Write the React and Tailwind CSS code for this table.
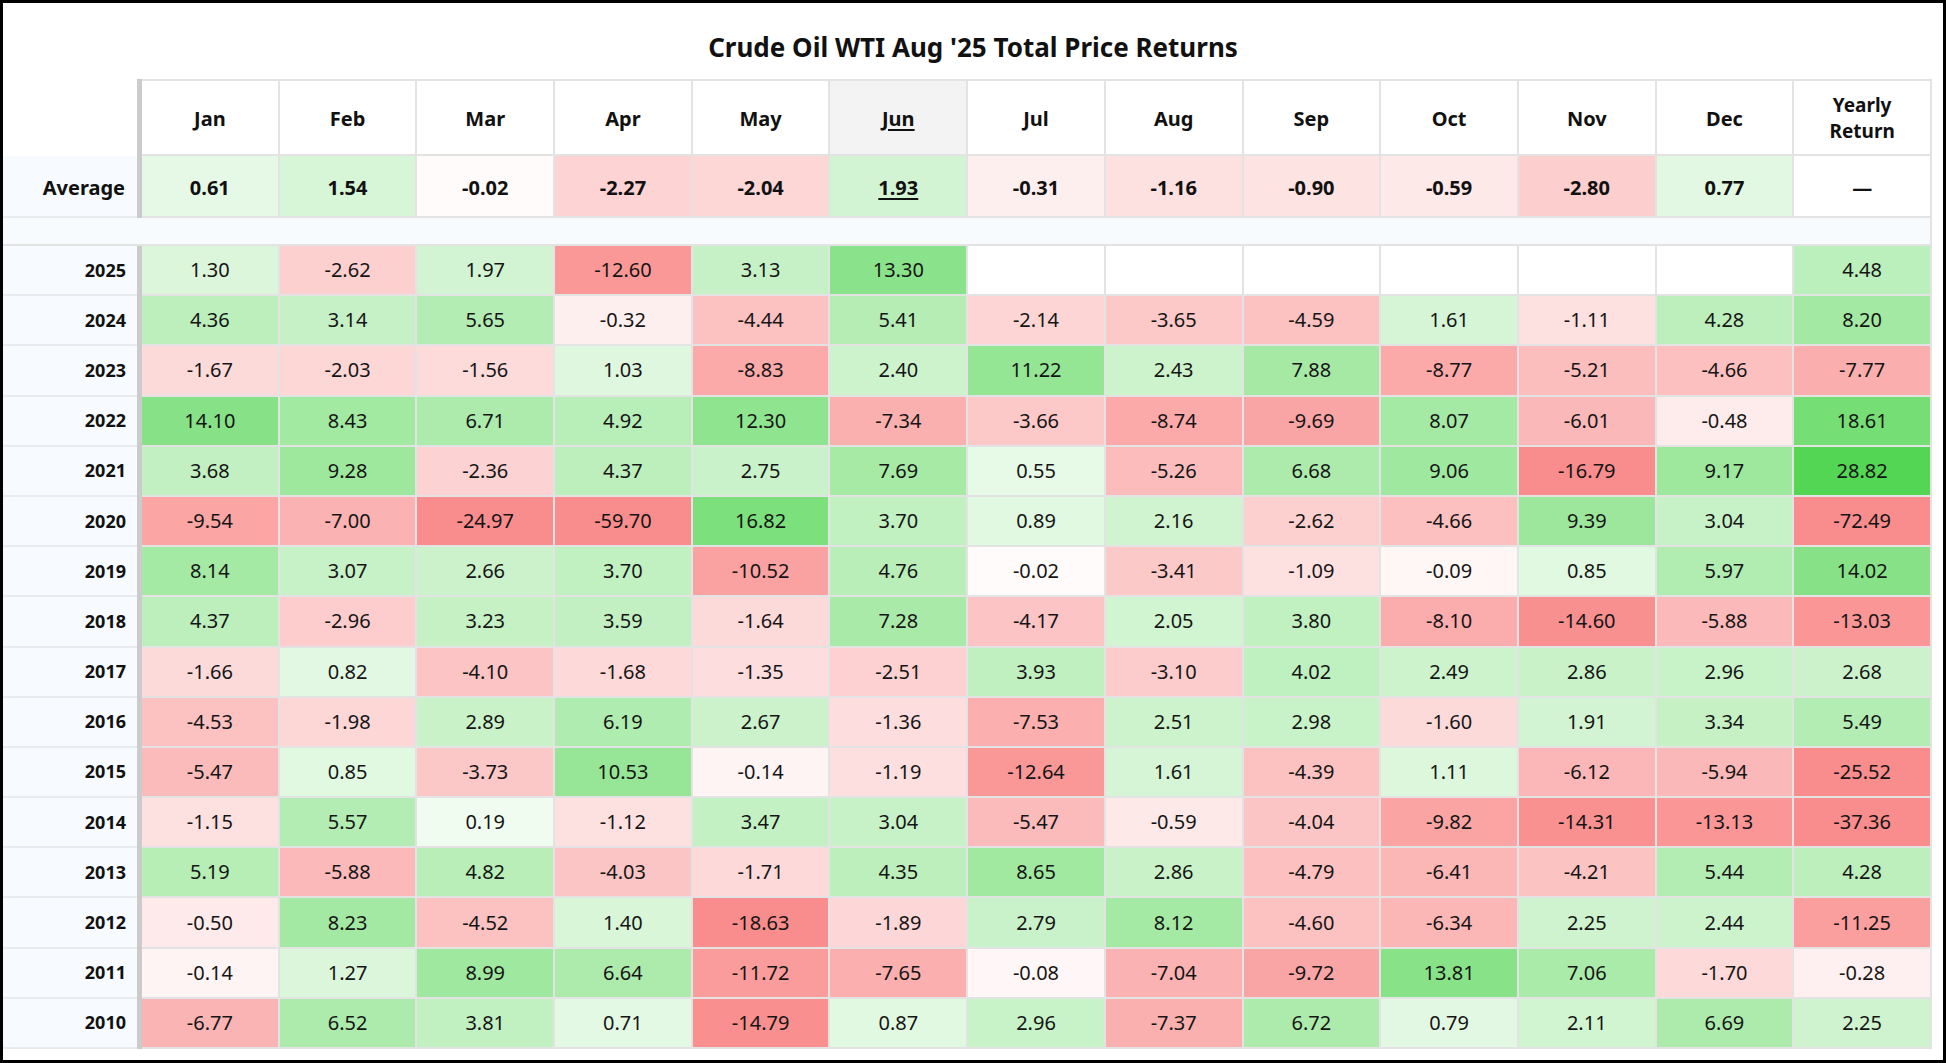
import React from "react";

const months = ["Jan", "Feb", "Mar", "Apr", "May", "Jun", "Jul", "Aug", "Sep", "Oct", "Nov", "Dec"];
const average = [0.61, 1.54, -0.02, -2.27, -2.04, 1.93, -0.31, -1.16, -0.9, -0.59, -2.8, 0.77, null];

const rows = [
  ["2025", [1.3, -2.62, 1.97, -12.6, 3.13, 13.3, null, null, null, null, null, null, 4.48]],
  ["2024", [4.36, 3.14, 5.65, -0.32, -4.44, 5.41, -2.14, -3.65, -4.59, 1.61, -1.11, 4.28, 8.2]],
  ["2023", [-1.67, -2.03, -1.56, 1.03, -8.83, 2.4, 11.22, 2.43, 7.88, -8.77, -5.21, -4.66, -7.77]],
  ["2022", [14.1, 8.43, 6.71, 4.92, 12.3, -7.34, -3.66, -8.74, -9.69, 8.07, -6.01, -0.48, 18.61]],
  ["2021", [3.68, 9.28, -2.36, 4.37, 2.75, 7.69, 0.55, -5.26, 6.68, 9.06, -16.79, 9.17, 28.82]],
  ["2020", [-9.54, -7.0, -24.97, -59.7, 16.82, 3.7, 0.89, 2.16, -2.62, -4.66, 9.39, 3.04, -72.49]],
  ["2019", [8.14, 3.07, 2.66, 3.7, -10.52, 4.76, -0.02, -3.41, -1.09, -0.09, 0.85, 5.97, 14.02]],
  ["2018", [4.37, -2.96, 3.23, 3.59, -1.64, 7.28, -4.17, 2.05, 3.8, -8.1, -14.6, -5.88, -13.03]],
  ["2017", [-1.66, 0.82, -4.1, -1.68, -1.35, -2.51, 3.93, -3.1, 4.02, 2.49, 2.86, 2.96, 2.68]],
  ["2016", [-4.53, -1.98, 2.89, 6.19, 2.67, -1.36, -7.53, 2.51, 2.98, -1.6, 1.91, 3.34, 5.49]],
  ["2015", [-5.47, 0.85, -3.73, 10.53, -0.14, -1.19, -12.64, 1.61, -4.39, 1.11, -6.12, -5.94, -25.52]],
  ["2014", [-1.15, 5.57, 0.19, -1.12, 3.47, 3.04, -5.47, -0.59, -4.04, -9.82, -14.31, -13.13, -37.36]],
  ["2013", [5.19, -5.88, 4.82, -4.03, -1.71, 4.35, 8.65, 2.86, -4.79, -6.41, -4.21, 5.44, 4.28]],
  ["2012", [-0.5, 8.23, -4.52, 1.4, -18.63, -1.89, 2.79, 8.12, -4.6, -6.34, 2.25, 2.44, -11.25]],
  ["2011", [-0.14, 1.27, 8.99, 6.64, -11.72, -7.65, -0.08, -7.04, -9.72, 13.81, 7.06, -1.7, -0.28]],
  ["2010", [-6.77, 6.52, 3.81, 0.71, -14.79, 0.87, 2.96, -7.37, 6.72, 0.79, 2.11, 6.69, 2.25]],
];

function cellColor(v) {
  if (v === null || v === undefined) return "#ffffff";
  if (v >= 0) {
    const d = Math.min(32 * Math.sqrt(v), 200);
    const rb = Math.round(255 - d);
    const g = Math.round(255 - 0.24 * d);
    return `rgb(${rb},${g},${rb})`;
  }
  const d = Math.min(29 * Math.sqrt(-v), 115);
  const r = Math.round(255 - 0.05 * d);
  const gb = Math.round(255 - d);
  return `rgb(${r},${gb},${gb})`;
}

const fmt = (v) => (v === null ? "" : v.toFixed(2));

const gridCls = "grid grid-cols-[134px_5px_repeat(13,minmax(0,1fr))] w-[1929px]";

export default function App() {
  return (
    <div className="w-[1946px] h-[1063px] border-[3px] border-black bg-white text-[#151515] font-['Noto_Sans',sans-serif]">
      <div className="h-[76px] pt-[27px] text-center text-[26px] leading-[35px] font-bold text-[#111]">
        Crude Oil WTI Aug '25 Total Price Returns
      </div>

      {/* header */}
      <div className={`${gridCls} h-[77px]`}>
        <div className="bg-white" />
        <div className="bg-[#cbcbcb]" />
        {months.map((m) => (
          <div
            key={m}
            className={`flex items-center justify-center pt-[2px] border-t-2 border-r-2 border-b-2 border-[#e3e3e3] text-[20px] font-bold text-[#111] ${
              m === "Jun" ? "bg-[#f3f3f3] underline underline-offset-[3px]" : "bg-white"
            }`}
          >
            {m}
          </div>
        ))}
        <div className="flex items-center justify-center border-t-2 border-r-2 border-b-2 border-[#e3e3e3] text-[19px] leading-[26px] font-bold text-center text-[#111]">
          Yearly
          <br />
          Return
        </div>
      </div>

      {/* average */}
      <div className={`${gridCls} h-[62px]`}>
        <div className="flex items-center justify-end pt-[3px] pr-[12px] bg-[#f7fbff] border-b-2 border-[#e8ecef] text-[20px] font-bold text-[#111]">
          Average
        </div>
        <div className="bg-[#cbcbcb]" />
        {average.map((v, i) => (
          <div
            key={i}
            className={`flex items-center justify-center pt-[3px] border-r-2 border-b-2 border-[#e3e3e3] text-[20px] font-bold text-[#111] ${
              i === 5 ? "underline underline-offset-[3px]" : ""
            }`}
            style={{ backgroundColor: cellColor(v) }}
          >
            {v === null ? "—" : fmt(v)}
          </div>
        ))}
      </div>

      {/* spacer */}
      <div className="w-[1929px] h-[28px] bg-[#f7fbfe] border-r-2 border-b-2 border-[#e3e3e3]" />

      {/* data rows */}
      {rows.map(([year, vals]) => (
        <div key={year} className={`${gridCls} h-[50.2px]`}>
          <div className="flex items-center justify-end pr-[11px] bg-[#f7fbff] border-b-2 border-[#e8ecef] text-[18px] font-bold text-[#111]">
            {year}
          </div>
          <div className="bg-[#cbcbcb]" />
          {vals.map((v, i) => (
            <div
              key={i}
              className="flex items-center justify-center border-r-2 border-b-2 border-[#e3e3e3] text-[20px]"
              style={{ backgroundColor: cellColor(v) }}
            >
              {fmt(v)}
            </div>
          ))}
        </div>
      ))}
    </div>
  );
}
